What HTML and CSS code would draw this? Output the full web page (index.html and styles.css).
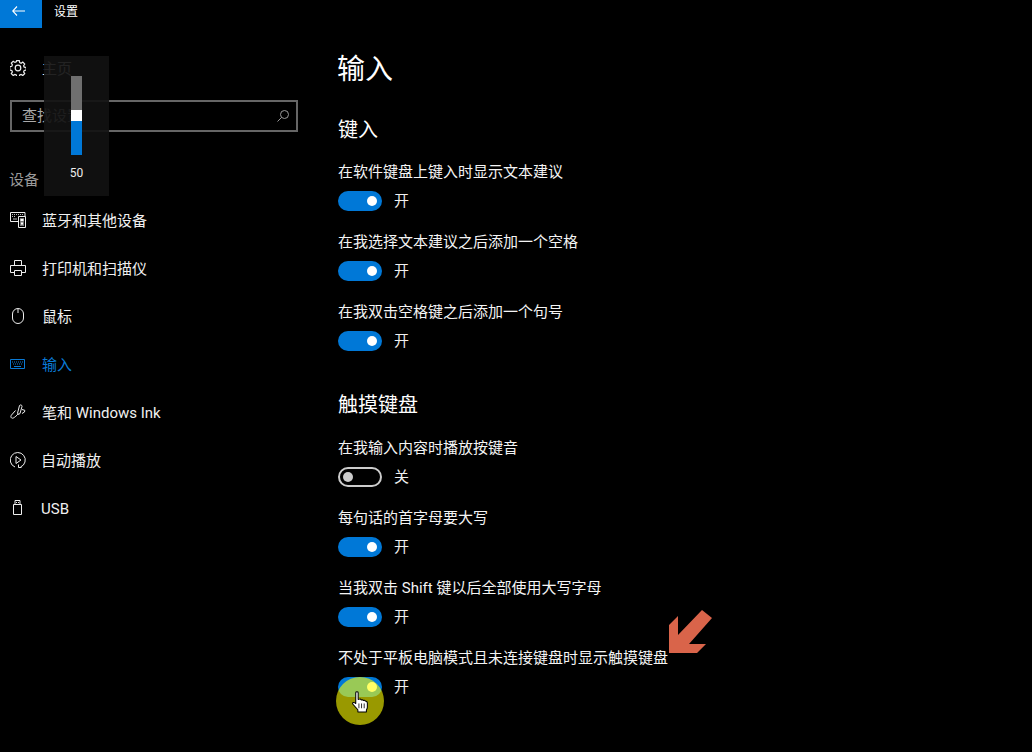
FILE: index.html
```html
<!DOCTYPE html>
<html lang="zh-CN">
<head>
<meta charset="utf-8">
<title>设置</title>
<link rel="stylesheet" href="styles.css">
</head>
<body>
<div class="app">
  <header class="titlebar">
    <div class="back">
      <svg width="13" height="10" viewBox="0 0 13 10" fill="none" stroke="#fff" stroke-width="1.1"><path d="M5 .5.7 5 5 9.500M.7 5H13"/></svg>
    </div>
    <div class="app-title">设置</div>
  </header>
  <div class="columns">
    <aside class="sidebar">
      <div class="nav-item home">
        <svg class="icon" width="16" height="16" viewBox="0 0 16 16" fill="none" stroke="#eee" stroke-width="1.200"><circle cx="8" cy="8" r="2.800"/><path d="M6.700.6h2.600l.4 2 1.400.6 1.700-1.100 1.900 1.900-1.100 1.700.6 1.400 2 .4v2.600l-2 .4-.6 1.400 1.100 1.700-1.900 1.900-1.700-1.100-1.400.6-.4 2H6.700l-.4-2-1.400-.6-1.700 1.100-1.900-1.900 1.100-1.700-.6-1.400-2-.4V6.700l2-.4.6-1.400-1.100-1.700 1.900-1.900 1.700 1.100 1.400-.6z"/></svg>
        <span>主页</span>
      </div>
      <div class="search">
        <span class="placeholder">查找设置</span>
        <svg width="12" height="12" viewBox="0 0 12 12" fill="none" stroke="#999" stroke-width="1"><circle cx="7.500" cy="4.500" r="4"/><path d="M4.600 7.400.5 11.500"/></svg>
      </div>
      <div class="group-label">设备</div>
      <nav>
        <div class="nav-item">
          <svg class="icon" width="16" height="16" viewBox="0 0 16 16" fill="none" stroke="#eee"><path d="M8 9.500H.5v-9h14.500v4"/><path d="M8.500 4.500h7v11h-7z"/><path d="M2 2.500h1m1 0h1m1 0h1m1 0h1m1 0h1m1 0h1M2 4.500h1m1 0h1M3 7h4" stroke="#bbb"/><rect x="10" y="6" width="4" height="8" fill="#777" stroke="none"/><path d="M10.500 8h3M11 11.500h2" stroke="#fff" stroke-width="2"/></svg>
          <span>蓝牙和其他设备</span>
        </div>
        <div class="nav-item">
          <svg class="icon" width="16" height="16" viewBox="0 0 16 16" fill="none" stroke="#eee"><path d="M4.500 5.500v-5h7v5M4.500 12.500h-4v-7h15v7h-4M4.500 10.500h7v5h-7z"/></svg>
          <span>打印机和扫描仪</span>
        </div>
        <div class="nav-item">
          <svg class="icon" width="16" height="16" viewBox="0 0 16 16" fill="none" stroke="#eee"><rect x="2.500" y="0.500" width="11" height="15" rx="5.500"/><path d="M8 1v4"/></svg>
          <span>鼠标</span>
        </div>
        <div class="nav-item active">
          <svg class="icon" width="16" height="16" viewBox="0 0 16 16" fill="none" stroke="#0a7ad6"><path d="M.5 3.500h14v9H.5z"/><path d="M2 6h11M3 8h9" stroke-dasharray="1 1"/><path d="M4 10.500h7"/></svg>
          <span>输入</span>
        </div>
        <div class="nav-item">
          <svg class="icon" width="16" height="16" viewBox="0 0 16 16" fill="none" stroke="#eee"><path d="M9.500 1.500c.8-1 2.700-.6 2.500 1L10 9.500l-1.500 1-1-1.200zM12 5.500l2.800.8-.3 1.700-2.500 1.500M5.500 6.500 1.500 11c-1.500 2 0 3.800 1.800 3 1.500-.6 3.500-2.500 5.200-4.500"/></svg>
          <span>笔和 Windows Ink</span>
        </div>
        <div class="nav-item tight">
          <svg class="icon" width="16" height="16" viewBox="0 0 16 16" fill="none" stroke="#eee"><path d="M10.500 15A7.500 7.500 0 1 0 5 15"/><path d="M8.500 12.500v3h3"/><path d="M6 4.500v7l5-3.500z"/></svg>
          <span>自动播放</span>
        </div>
        <div class="nav-item tight">
          <svg class="icon" width="16" height="16" viewBox="0 0 16 16" fill="none" stroke="#eee"><path d="M3.500 4.500h8v10h-8zM5 4.500v-4h5v4M6.500 2v1M8.500 2v1"/></svg>
          <span>USB</span>
        </div>
      </nav>
    </aside>
    <main class="content">
      <h1>输入</h1>
      <h2>键入</h2>
      <div class="setting"><div class="label">在软件键盘上键入时显示文本建议</div><div class="switch-row"><span class="switch on"></span><span class="state">开</span></div></div>
      <div class="setting"><div class="label">在我选择文本建议之后添加一个空格</div><div class="switch-row"><span class="switch on"></span><span class="state">开</span></div></div>
      <div class="setting"><div class="label">在我双击空格键之后添加一个句号</div><div class="switch-row"><span class="switch on"></span><span class="state">开</span></div></div>
      <h2 class="second">触摸键盘</h2>
      <div class="setting"><div class="label">在我输入内容时播放按键音</div><div class="switch-row"><span class="switch off"></span><span class="state">关</span></div></div>
      <div class="setting"><div class="label">每句话的首字母要大写</div><div class="switch-row"><span class="switch on"></span><span class="state">开</span></div></div>
      <div class="setting"><div class="label">当我双击 Shift 键以后全部使用大写字母</div><div class="switch-row"><span class="switch on"></span><span class="state">开</span></div></div>
      <div class="setting"><div class="label">不处于平板电脑模式且未连接键盘时显示触摸键盘</div><div class="switch-row"><span class="switch on"></span><span class="state">开</span></div></div>
    </main>
  </div>
  <div class="volume">
    <div class="track"><div class="rest"></div><div class="thumb"></div><div class="fill"></div></div>
    <div class="value">50</div>
  </div>
  <svg class="arrow" width="48" height="48" viewBox="0 0 48 48"><polygon fill="#d9644a" points="1,17 1,45 29,45 38,36 21,36 44,10 34,2 10,27 10,8"/></svg>
  <div class="click-dot"></div>
  <svg class="cursor" width="19" height="23" viewBox="0 0 18 24" preserveAspectRatio="none"><path fill="#fff" stroke="#000" stroke-width="1" stroke-linejoin="round" d="M4.500 1.800c0-1.400 2.300-1.400 2.300 0v7l1.200-.3c.7-.2 1.400.1 1.600.6l.2.300c.7-.3 1.600-.1 1.900.5.800-.3 1.600 0 1.900.6l.7.200c.7.300 1.200.9 1.200 1.700v4.600c0 1-.4 1.900-.9 2.700v2.300H6.500v-2.300c-1-1.300-2.200-3-3.600-4.600-.8-.9-1.800-1.600-1.400-2.500.4-.8 1.500-.8 2.300-.1l.7.600z"/><path d="M7.500 13v5M10 13v5M12.500 13v5" stroke="#000" stroke-width=".8" fill="none"/></svg>
</div>
</body>
</html>
```

FILE: styles.css
```css
* { box-sizing: border-box; }
html, body { margin: 0; height: 100%; background: #000; }
body {
  color: #fff;
  font-family: Roboto, "Noto Sans CJK SC", sans-serif;
  font-size: 15px;
  overflow: hidden;
}
.app { position: relative; width: 1032px; height: 752px; overflow: hidden; background: #000; }

.titlebar { display: flex; align-items: center; height: 28px; }
.back { display: flex; align-items: center; justify-content: center; width: 42px; height: 28px; background: #0078d7; }
.back svg { margin: -6px 6px 0 0; }
.app-title { margin-left: 12px; font-size: 12px; line-height: 24px; margin-top: -4px; }

.columns { display: flex; }
.sidebar { width: 338px; padding-top: 16px; flex: none; }
.nav-item { display: flex; align-items: center; gap: 16px; height: 48px; padding-left: 10px; color: #f0f0f0; line-height: 20px; }
.nav-item span { padding-top: 2px; }
.nav-item.tight { gap: 15px; }
.icon { flex: none; }
.nav-item.active { color: #0a7ad6; }

.search {
  display: flex; align-items: center; justify-content: space-between;
  width: 288px; height: 32px; margin: 8px 0 0 10px; padding: 0 7px 0 10px;
  border: 2px solid #666;
}
.placeholder { color: #aaa; font-size: 15px; margin-top: -4px; }
.group-label { height: 64px; padding: 38px 0 0 9px; line-height: 20px; color: #999; }

.content { flex: 1; padding-top: 20px; }
h1 { height: 40px; margin: 0 0 0 -1px; padding-top: 2px; font-size: 28px; font-weight: 400; line-height: 40px; }
h2 { margin: 28px 0 17px; font-size: 20px; font-weight: 400; line-height: 28px; }
h2.second { margin: 40px 0 18px; }
.setting { margin-bottom: 20px; }
.setting:last-child { margin-bottom: 0; }
.label { height: 20px; padding-top: 1px; line-height: 20px; color: #f4f4f4; }
.switch-row { display: flex; align-items: center; gap: 12px; height: 20px; margin-top: 10px; color: #f0f0f0; }
.state { font-size: 15px; margin-top: -4px; }

.switch { position: relative; display: block; width: 44px; height: 20px; border-radius: 10px; }
.switch::after { content: ""; position: absolute; top: 5px; width: 10px; height: 10px; border-radius: 50%; }
.switch.on { background: #0078d7; }
.switch.on::after { left: 29px; background: #fff; }
.switch.off { border: 2px solid #ccc; }
.switch.off::after { top: 3px; left: 3px; background: #ccc; }

.volume {
  position: absolute; left: 44px; top: 56px; width: 65px; height: 140px;
  background: rgba(17, 17, 17, .92);
  display: flex; flex-direction: column; align-items: center;
  padding-top: 20px;
}
.track { display: flex; flex-direction: column; width: 11px; height: 79px; }
.rest { height: 34px; background: #6f6f6f; }
.thumb { height: 11px; background: #fff; }
.fill { height: 34px; background: #0078d7; }
.value { margin-top: 8px; font-size: 12px; line-height: 20px; color: #eee; }

.arrow { position: absolute; left: 668px; top: 608px; }
.click-dot { position: absolute; left: 336px; top: 677px; width: 48px; height: 48px; border-radius: 50%; background: rgba(255, 255, 0, .6); }
.cursor { position: absolute; left: 351px; top: 691px; }
```
